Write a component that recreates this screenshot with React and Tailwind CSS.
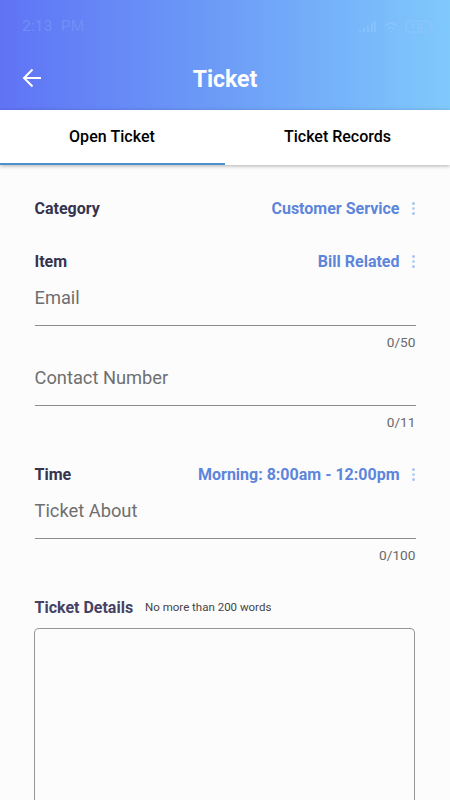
function Dots() {
  return (
    <span className="ml-3 flex w-[4px] shrink-0 flex-col items-center gap-[2px] pb-px">
      <i className="size-[3px] rounded-full bg-[#a9c5ef]" />
      <i className="size-[3px] rounded-full bg-[#b5d4f0]" />
      <i className="size-[3px] rounded-full bg-[#a9c5ef]" />
    </span>
  );
}

function SelectRow({ label, value }) {
  return (
    <div className="flex h-6 items-center justify-between text-[16px] font-bold">
      <span className="text-[#35344f]">{label}</span>
      <span className="flex items-center text-[#5c85db]">
        <span>{value}</span>
        <Dots />
      </span>
    </div>
  );
}

function Field({ label, count }) {
  return (
    <div>
      <div className="flex h-[52px] items-center border-b border-[#8c8c8c] pb-[3px] text-[18.3px] text-[#6f6f6f]">
        <span>{label}</span>
      </div>
      <div className="flex h-7 items-center justify-end pt-[5px] text-[13.7px] text-[#6a6a6a]">
        {count}
      </div>
    </div>
  );
}

function StatusBar() {
  return (
    <div className="flex h-[54px] items-center justify-between pr-[16px] pl-[22px] text-[15.5px] text-[#708ff7]">
      <span className="tracking-[0.2px]">2:13&nbsp; PM</span>
      <svg width="76" height="16" viewBox="0 0 76 16" fill="none" stroke="#8ac4fb" strokeWidth="1.5">
        <path d="M2 13v-2M6 13V9M10 13V7M14 13V4M17 13V2" />
        <path d="M27 7c4-4 8-4 11 0M30 10c2-2 4-2 6 0M33 13h1" />
        <rect x="48" y="2" width="25" height="11" rx="4" />
        <path d="M74 6v4M55 5v5M60 5h4v5h-4z" />
      </svg>
    </div>
  );
}

export default function App() {
  return (
    <div className="flex h-[800px] w-[450px] flex-col overflow-hidden bg-[#fcfcfc] font-['Roboto',sans-serif]">
      <header className="h-[110px] shrink-0 bg-linear-to-r from-[#6073f5] via-[#6d9df7] to-[#80c9fc]">
        <StatusBar />
        <div className="grid h-[50px] grid-cols-[1fr_auto_1fr] items-center">
          <svg className="-mt-[2px] ml-[22px]" width="20" height="20" viewBox="0 0 20 20" fill="none" stroke="white" strokeWidth="2">
            <path d="M10.5 1.5 2 10l8.5 8.5M2 10h17" />
          </svg>
          <h1 className="pt-[2px] text-[23px] font-bold text-white">Ticket</h1>
        </div>
      </header>
      <nav className="z-10 grid h-[55px] shrink-0 grid-cols-2 bg-white text-[16px] font-medium text-black shadow-[0_1px_4px_rgba(0,0,0,0.3)]">
        <div className="flex items-center justify-center border-b-2 border-[#4f8fcc]">
          <span className="-ml-px tracking-[0.05px]">Open Ticket</span>
        </div>
        <div className="flex items-center justify-center border-b-2 border-transparent">
          <span>Ticket Records</span>
        </div>
      </nav>
      <main className="flex min-h-0 flex-1 flex-col px-[34.5px] pt-8">
        <SelectRow label="Category" value="Customer Service" />
        <div className="mt-[29px]">
          <SelectRow label="Item" value="Bill Related" />
        </div>
        <Field label="Email" count="0/50" />
        <Field label="Contact Number" count="0/11" />
        <div className="mt-[29px]">
          <SelectRow label="Time" value="Morning: 8:00am - 12:00pm" />
        </div>
        <Field label="Ticket About" count="0/100" />
        <div className="mt-[29px] flex h-6 items-center gap-3">
          <span className="text-[16px] font-bold text-[#444363]">Ticket Details</span>
          <span className="text-[11.5px] text-[#444444]">No more than 200 words</span>
        </div>
        <div className="mt-[8px] -ml-[0.5px] mr-[0.5px] flex-1 rounded-t-[5px] border border-b-0 border-[#969696]" />
      </main>
    </div>
  );
}
